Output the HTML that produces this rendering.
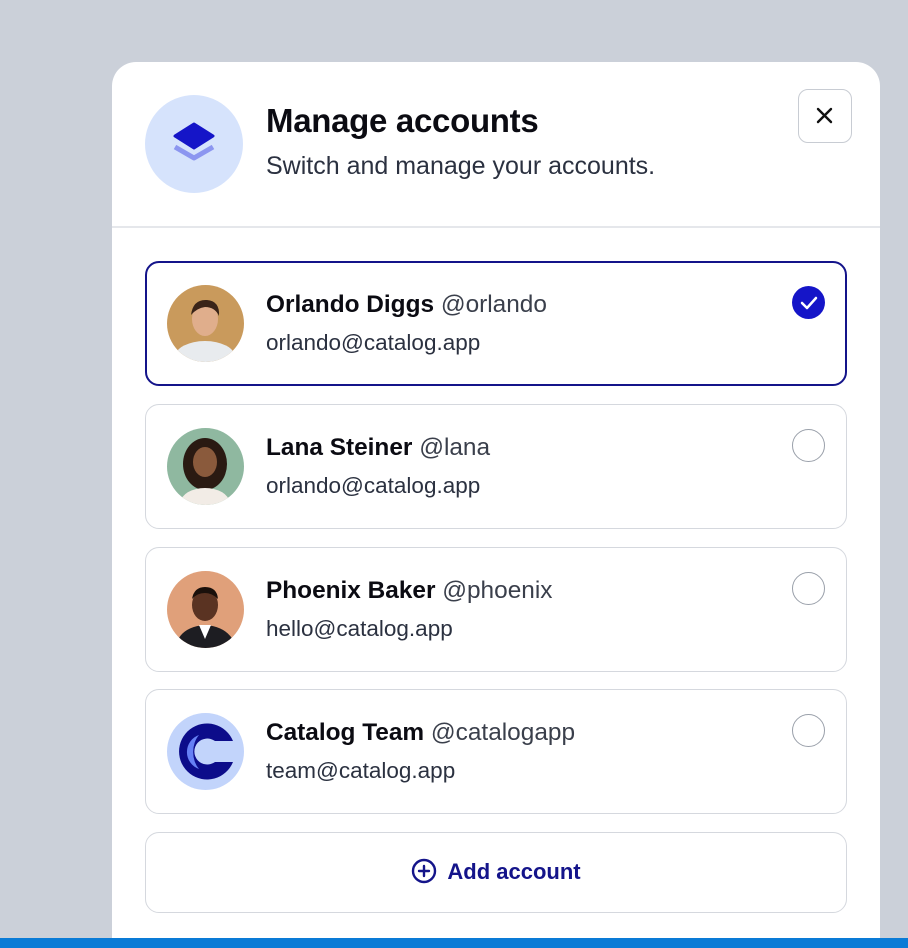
<!DOCTYPE html>
<html><head><style>
*{box-sizing:border-box;margin:0;padding:0}
html,body{width:908px;height:948px;overflow:hidden}
body{background:#cbd0d9;font-family:"Liberation Sans",sans-serif;position:relative}
.card{position:absolute;left:112px;top:62px;width:768px;height:886px;background:#fff;border-radius:24px 24px 0 0}
.ic{position:absolute;left:145px;top:95px;width:98px;height:98px;border-radius:50%;background:#d6e3fc}
.t{position:absolute;left:266px;top:102px;font-size:33px;font-weight:bold;color:#0b0b12;letter-spacing:-0.3px}
.s{position:absolute;left:266px;top:152px;font-size:25px;color:#2b3140}
.x{position:absolute;left:798px;top:89px;width:54px;height:54px;border:1.5px solid #c8ccd3;border-radius:10px;background:#fff}
.hr{position:absolute;left:112px;top:226px;width:768px;height:2px;background:#e5e7eb}
.row{position:absolute;left:145px;width:702px;height:125px;border:1.5px solid #d5d8de;border-radius:14px;background:#fff}
.row.sel{border:2.5px solid #14148a}
.av{position:absolute;left:21px;top:23px;width:77px;height:77px;border-radius:50%;overflow:hidden}
.nm{position:absolute;left:120px;top:29px;font-size:24.4px;color:#0b0b12;white-space:nowrap}
.nm b{font-weight:bold}.nm span{color:#3a3f4b}
.em{position:absolute;left:120px;top:68px;font-size:22.5px;color:#2b3140}
.rd{position:absolute;left:646px;top:24px;width:33px;height:33px;border-radius:50%;border:1.5px solid #9aa0aa}
.add{position:absolute;left:145px;top:832px;width:702px;height:81px;border:1.5px solid #d5d8de;border-radius:14px;background:#fff;text-align:center;line-height:78px;font-size:22px;font-weight:bold;color:#14148a}
.bar{position:absolute;left:0;top:938px;width:908px;height:10px;background:#0a7bd6}
</style></head><body>
<div class="card"></div>
<div class="ic"><svg width="98" height="98" viewBox="0 0 98 98"><path d="M30 52 L49 63 L68 52" fill="none" stroke="#8c96f0" stroke-width="5" stroke-linejoin="round"/><path d="M49 29 L68 41 L49 53 L30 41Z" fill="#1515c8" stroke="#1515c8" stroke-width="3" stroke-linejoin="round"/></svg></div>
<div class="t">Manage accounts</div>
<div class="s">Switch and manage your accounts.</div>
<div class="x"><svg width="51" height="51" viewBox="0 0 51 51"><path d="M19 19L32 32M32 19L19 32" stroke="#111" stroke-width="2.4" stroke-linecap="round"/></svg></div>
<div class="hr"></div>

<div class="row sel" style="top:261px;height:125px">
<div class="av" style="left:20px;top:22px;background:#c99a5c"><svg width="77" height="77"><ellipse cx="38" cy="72" rx="30" ry="16" fill="#e8ebee"/><ellipse cx="38" cy="34" rx="13" ry="17" fill="#e0ae8c"/><path d="M24 30Q26 14 40 15Q53 16 52 31Q48 22 38 22Q30 23 24 30Z" fill="#3a2418"/></svg></div>
<div class="nm" style="left:119px;top:28px"><b>Orlando Diggs</b> <span>@orlando</span></div>
<div class="em" style="left:119px;top:67px">orlando@catalog.app</div>
<div style="position:absolute;left:645px;top:23px;width:33px;height:33px;border-radius:50%;background:#1515c8"><svg width="33" height="33"><path d="M10 17L15 22L24 12" fill="none" stroke="#fff" stroke-width="2.5" stroke-linecap="round" stroke-linejoin="round"/></svg></div>
</div>

<div class="row" style="top:404px">
<div class="av" style="background:#8fb8a0"><svg width="77" height="77"><ellipse cx="38" cy="36" rx="22" ry="26" fill="#2a1a12"/><ellipse cx="38" cy="74" rx="24" ry="14" fill="#f2ece6"/><ellipse cx="38" cy="34" rx="12" ry="15" fill="#8a5a3c"/></svg></div>
<div class="nm"><b>Lana Steiner</b> <span>@lana</span></div>
<div class="em">orlando@catalog.app</div>
<div class="rd"></div></div>

<div class="row" style="top:547px">
<div class="av" style="background:#e0a07a"><svg width="77" height="77"><path d="M8 77Q12 56 38 54Q64 56 69 77Z" fill="#1d1d22"/><path d="M32 54L38 68L44 54Z" fill="#fff"/><ellipse cx="38" cy="34" rx="13" ry="16" fill="#5a3322"/><path d="M25 28Q27 16 38 16Q50 16 51 28Q45 22 38 22Q30 22 25 28Z" fill="#1a100b"/></svg></div>
<div class="nm"><b>Phoenix Baker</b> <span>@phoenix</span></div>
<div class="em">hello@catalog.app</div>
<div class="rd"></div></div>

<div class="row" style="top:689px">
<div class="av" style="background:#c2d4fb"><svg width="77" height="77"><path d="M66 28A28 28 0 1 0 66 49L48 49A13 13 0 1 1 48 28Z" fill="#0c0c8a"/><path d="M32 22A16 22 0 0 0 32 56A18 18 0 0 1 32 22Z" fill="#6680f5"/></svg></div>
<div class="nm"><b>Catalog Team</b> <span>@catalogapp</span></div>
<div class="em">team@catalog.app</div>
<div class="rd"></div></div>

<div class="add"><svg width="26" height="26" viewBox="0 0 26 26" style="vertical-align:-5px;margin-right:10px"><circle cx="13" cy="13" r="11" fill="none" stroke="#14148a" stroke-width="2.4"/><path d="M13 8V18M8 13H18" stroke="#14148a" stroke-width="2.4" stroke-linecap="round"/></svg>Add account</div>
<div class="bar"></div>
</body></html>
